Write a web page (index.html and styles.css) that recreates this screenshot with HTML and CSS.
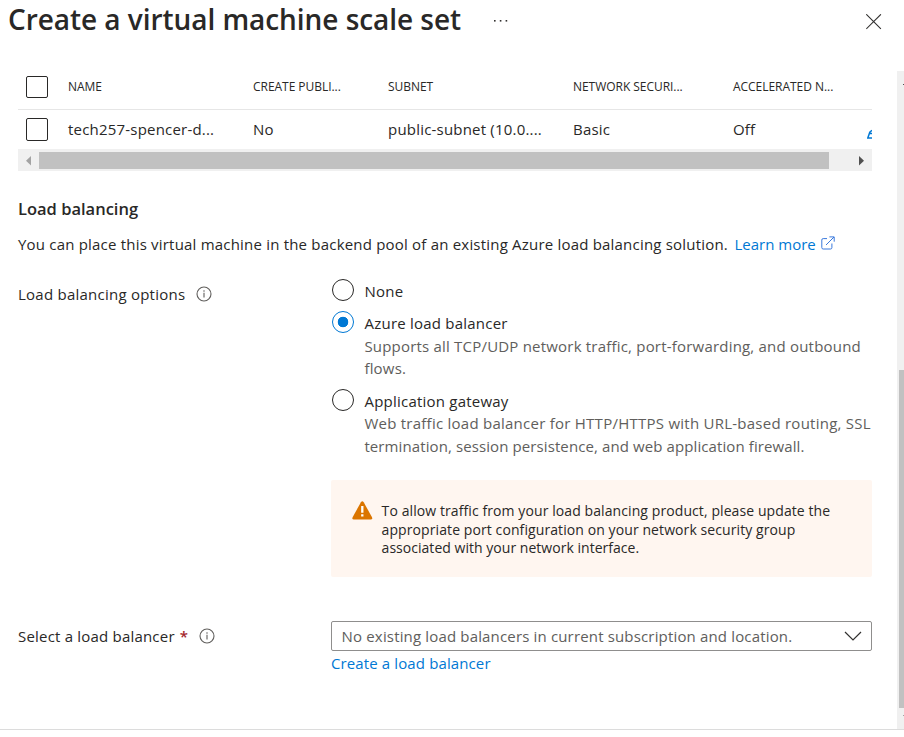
FILE: index.html
```html
<!DOCTYPE html>
<html lang="en">
<head>
<meta charset="utf-8">
<title>Create a virtual machine scale set</title>
<link rel="stylesheet" href="styles.css">
</head>
<body>
<header class="topbar">
  <h1 class="title">Create a virtual machine scale set</h1>
  <svg class="more" width="16" height="4" viewBox="0 0 16 4" fill="#323130"><rect x="1" y="1" width="1.6" height="1.6"/><rect x="6.8" y="1" width="1.6" height="1.6"/><rect x="12.6" y="1" width="1.6" height="1.6"/></svg>
  <svg class="close" width="16" height="16" viewBox="0 0 16 16" fill="none" stroke="#323130" stroke-width="1.1"><path d="M.3.3l14.6 14.6M14.9.3L.3 14.9"/></svg>
</header>
<div class="body">
  <main class="content">
    <div class="grid">
      <div class="row head">
        <span class="check"></span><span>NAME</span><span>CREATE PUBLI...</span><span>SUBNET</span><span>NETWORK SECURI...</span><span>ACCELERATED N...</span><span></span>
      </div>
      <div class="row">
        <span class="check"></span><span>tech257-spencer-d...</span><span>No</span><span>public-subnet (10.0....</span><span>Basic</span><span>Off</span>
        <svg class="edit" width="5" height="10" viewBox="0 0 5 10" fill="none" stroke="#0078d4" stroke-width="1.5"><path d="M5 1.2L2.8 3.2 .8 9H5M2.6 4.6H5"/></svg>
      </div>
    </div>
    <div class="hscroll">
      <svg width="21" height="22" viewBox="0 0 21 22" fill="#a3a3a3"><path d="M13 7v9.4L8 11.7z"/></svg>
      <div class="hthumb"></div>
      <svg width="21" height="22" viewBox="0 0 21 22" fill="#505050"><path d="M8 7v9.4l5-4.7z"/></svg>
    </div>

    <h2 class="section">Load balancing</h2>
    <p class="intro">You can place this virtual machine in the backend pool of an existing Azure load balancing solution. <a class="link learn">Learn more</a><svg class="ext" width="14" height="14" viewBox="0 0 14 14" fill="none" stroke="#3878dc"><path d="M6 2.6H2.2Q.8 2.6.8 4v7.6Q.8 13 2.2 13h7.3q1.4 0 1.4-1.4V7.5M8.4.9h4.8v4.8M13 1L5 9"/></svg></p>

    <div class="field options">
      <div class="label"><span>Load balancing options</span>
        <svg class="info" width="16" height="16" viewBox="0 0 16 16" fill="none" stroke="#605e5c" stroke-width="1.1"><circle cx="8" cy="8" r="7"/><path d="M8 6.8v4.6M8 4.3v1.4"/></svg>
      </div>
      <div class="control">
        <div class="radio"><span class="dot"></span><span class="name">None</span></div>
        <div class="radio azure"><span class="dot on"></span><span class="name">Azure load balancer</span></div>
        <p class="desc azure-desc">Supports all TCP/UDP network traffic, port-forwarding, and outbound<br>flows.</p>
        <div class="radio"><span class="dot"></span><span class="name">Application gateway</span></div>
        <p class="desc gateway-desc"><span class="wide">Web traffic load balancer for HTTP/HTTPS with URL-based routing, SSL</span><br><span class="tight">termination, session persistence, and web application firewall.</span></p>
        <div class="alert">
          <svg width="21" height="19" viewBox="0 0 21 19"><path d="M8.9 1.3Q10.3-.6 11.7 1.3L20 16.2Q20.7 18.4 18.8 18.4H1.8Q-.1 18.4.6 16.2z" fill="#db7500"/><path d="M10.3 5v6.8M10.3 13.2v2.4" stroke="#fff" stroke-width="2.3"/></svg>
          <p>To allow traffic from your load balancing product, please update the<br>appropriate port configuration on your network security group<br><span class="last">associated with your network interface.</span></p>
        </div>
      </div>
    </div>

    <div class="field select">
      <div class="label"><span>Select a load balancer</span><span class="req">*</span>
        <svg class="info" width="16" height="16" viewBox="0 0 16 16" fill="none" stroke="#605e5c" stroke-width="1.1"><circle cx="8" cy="8" r="7"/><path d="M8 6.8v4.6M8 4.3v1.4"/></svg>
      </div>
      <div class="control">
        <div class="dropdown"><span>No existing load balancers in current subscription and location.</span>
          <svg width="18" height="10" viewBox="0 0 18 10" fill="none" stroke="#323130" stroke-width="1.2"><path d="M1 1l8 8 8-8"/></svg>
        </div>
        <a class="link create">Create a load balancer</a>
      </div>
    </div>
  </main>
  <div class="vscroll">
    <span class="tick"></span>
    <div class="vthumb"></div>
    <span class="tick faint"></span>
  </div>
</div>
</body>
</html>
```
FILE: styles.css
```css
* { box-sizing: border-box; }
body {
  margin: 0;
  height: 737px;
  overflow: hidden;
  background: #fff;
  color: #292827;
  font: 15px/22px "Open Sans", "Noto Sans", sans-serif;
  letter-spacing: .2px;
}
h1, h2, p { margin: 0; }
svg { display: block; flex: none; }

.topbar { display: flex; height: 71px; padding: 0 22px 0 8px; }
.title { font-size: 28px; line-height: 38px; font-weight: 600; letter-spacing: -.05px; white-space: nowrap; }
.more { margin: 19px 0 0 32px; }
.close { margin: 14px 0 0 auto; }

.body { display: flex; height: 659px; border-bottom: 1px solid #dcdcdc; }
.content { flex: 1; padding: 0 25px 0 18px; }

.grid { overflow: hidden; }
.row {
  display: grid;
  grid-template-columns: 50px 185px 135px 185px 160px 134px 5px;
  align-items: center;
  height: 39px;
  padding-bottom: 1px;
  white-space: nowrap;
}
.row.head { padding: 0 0 7px; border-bottom: 1px solid #e6e6e6; font-size: 12px; letter-spacing: -.04px; }
.check { width: 22px; height: 22px; margin-left: 8px; border: 1px solid #292827; border-radius: 2px; }
.row:not(.head) .check { height: 23px; margin-top: 1px; }
.edit { margin: 9px 0 0 0; }

.hscroll { display: flex; align-items: center; height: 22px; background: #f0f0f0; }
.hthumb { width: 790px; height: 17px; background: #c1c1c1; }
.hscroll svg:last-child { margin-left: auto; }

.section { margin-top: 27px; font-size: 16.5px; line-height: 22px; font-weight: 600; letter-spacing: 0; }
.intro { display: flex; margin-top: 13px; letter-spacing: .2px; white-space: nowrap; }
.link { color: #0078d4; }
.learn { margin-left: 6.5px; letter-spacing: 0; }
.ext { margin: 3px 0 0 5.5px; }

.field { display: flex; }
.label { display: flex; width: 313px; }
.control { width: 541px; }
.options { margin-top: 24px; }
.options .label { padding-top: 4px; letter-spacing: .24px; }
.info { margin: 3px 0 0 11px; }

.radio { display: flex; height: 22px; }
.dot { width: 22px; height: 22px; margin-left: 1px; border: 1px solid #292827; border-radius: 50%; }
.dot.on { border-color: #0078d4; background: radial-gradient(circle, #0078d4 5px, transparent 5.6px); }
.name { margin: 1px 0 0 10.5px; letter-spacing: .22px; }
.azure { margin-top: 10px; }
.desc { padding-left: 33.4px; color: #605e5c; white-space: nowrap; }
.azure-desc { margin: 2px 0 10px; }
.gateway-desc { margin-top: 1px; line-height: 23px; }
.wide { letter-spacing: .25px; }
.tight { letter-spacing: .1px; }

.alert { display: flex; height: 97px; margin-top: 22px; padding: 21px 0 0 21px; border-radius: 2px; background: #fff6f0; }
.alert p { margin: 1px 0 0 8.6px; font-size: 14px; line-height: 18.7px; letter-spacing: .09px; white-space: nowrap; }
.last { letter-spacing: .03px; }

.select { margin-top: 44px; }
.select .label { padding-top: 4px; }
.req { margin-left: 5px; color: #a4262c; font-weight: 600; }
.dropdown { display: flex; align-items: center; justify-content: space-between; height: 30px; padding: 0 9px 0 9.6px; border: 1px solid #8f8e8d; border-radius: 2px; color: #605e5c; letter-spacing: .16px; white-space: nowrap; }
.create { display: block; margin-top: 1px; letter-spacing: .12px; }

.vscroll { display: flex; flex-direction: column; width: 7px; background: #f0f0f0; }
.vthumb { margin: 285px 0 0 2px; height: 338px; background: #c1c1c1; }
.tick { width: 1px; height: 1px; margin: 13px 0 0 6px; background: #505050; }
.tick.faint { margin-top: 7px; background: #a3a3a3; }
```
